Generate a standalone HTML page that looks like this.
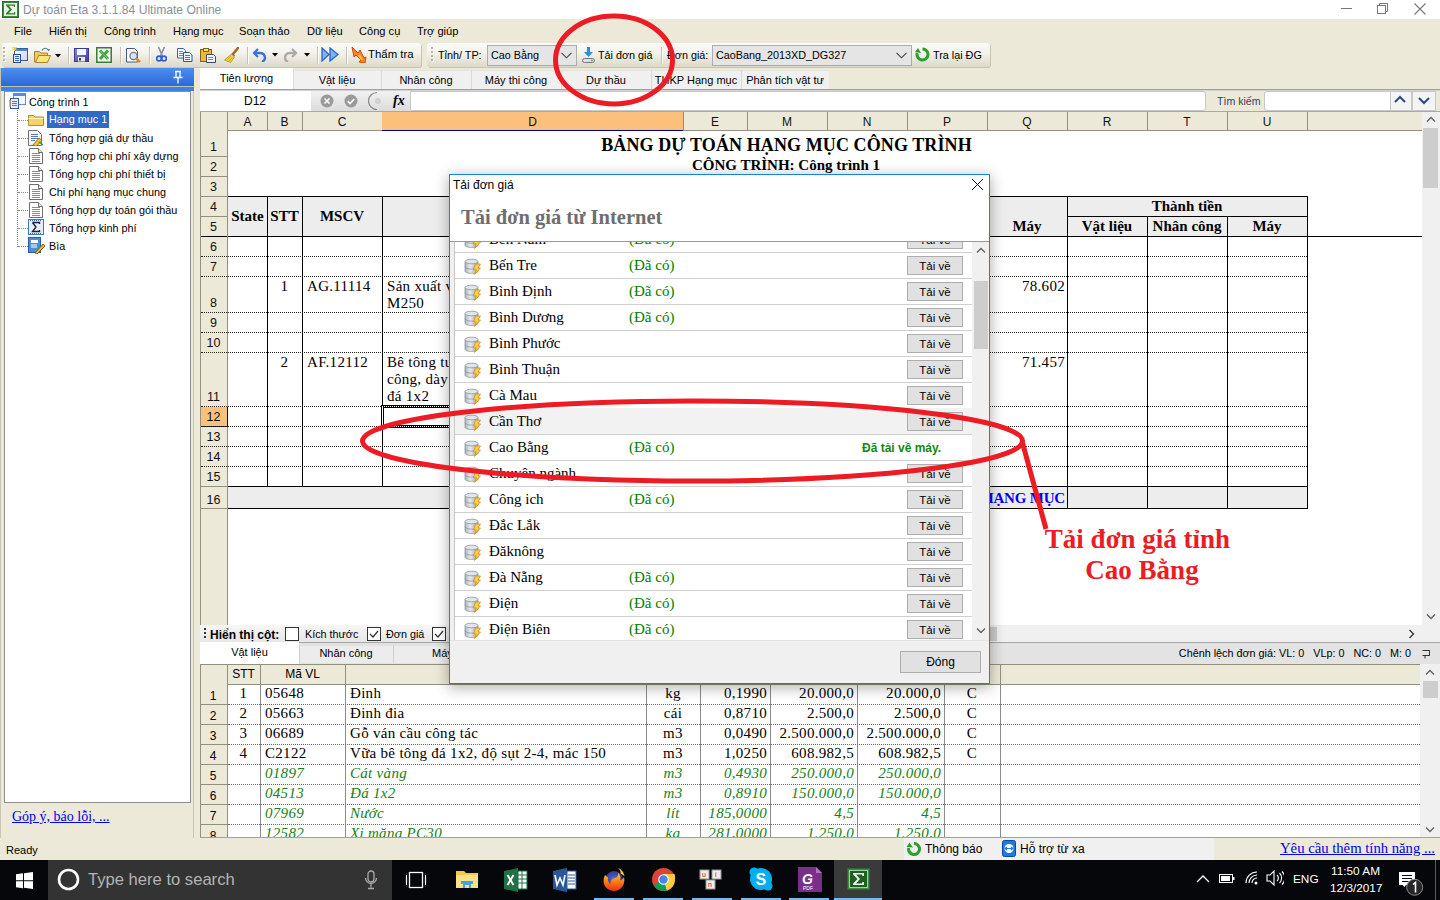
<!DOCTYPE html>
<html><head><meta charset="utf-8">
<style>
*{box-sizing:border-box}
html,body{margin:0;padding:0}
body{width:1440px;height:900px;overflow:hidden;position:relative;background:#ECE9D8;font-family:"Liberation Sans",sans-serif;font-size:11px;color:#000}
.a{position:absolute}
.t{position:absolute;white-space:nowrap;line-height:1}
.s{position:absolute;white-space:nowrap;line-height:1;font-family:"Liberation Serif",serif;font-size:15px;letter-spacing:0.3px}
.dh{position:absolute;height:0;border-top:1px dotted #222}
</style></head><body>
<div class="a" style="left:0px;top:0px;width:1440px;height:19px;background:#fff"></div>
<svg class="a" style="left:2px;top:1px;" width="17" height="17" viewBox="0 0 17 17"><rect x="0.5" y="0.5" width="16" height="16" fill="#3d8b40" stroke="#2a6a2d"/><rect x="2" y="2" width="13" height="13" fill="#e8f3e8"/><path d="M4 3.5h9v2.5h-1l-.5-1.2h-4.7l3.2 3.7-3.3 3.7h5l.5-1.3h1v2.6H4v-1l3.6-4-3.6-4z" fill="#2e7d32"/></svg>
<div class="t" style="left:23px;top:4px;font-size:12.1px;color:#8a8f9a">Dự toán Eta 3.1.1.84 Ultimate Online</div>
<div class="a" style="left:1341px;top:8px;width:11px;height:1px;background:#777"></div>
<svg class="a" style="left:1376px;top:2px;" width="14" height="14" viewBox="0 0 14 14"><rect x="1.5" y="3.5" width="8" height="8" fill="none" stroke="#777"/><path d="M3.5 3.5V1.5h8v8h-2" fill="none" stroke="#777"/></svg>
<svg class="a" style="left:1414px;top:3px;" width="12" height="12" viewBox="0 0 12 12"><path d="M.5 .5l11 11M11.5 .5l-11 11" stroke="#777" stroke-width="1.1"/></svg>
<div class="t" style="left:14px;top:26px;font-size:11.1px;color:#000">File</div>
<div class="t" style="left:49px;top:26px;font-size:11.1px;color:#000">Hiển thị</div>
<div class="t" style="left:104px;top:26px;font-size:11.1px;color:#000">Công trình</div>
<div class="t" style="left:173px;top:26px;font-size:11.1px;color:#000">Hạng mục</div>
<div class="t" style="left:239px;top:26px;font-size:11.1px;color:#000">Soạn thảo</div>
<div class="t" style="left:307px;top:26px;font-size:11.1px;color:#000">Dữ liệu</div>
<div class="t" style="left:359px;top:26px;font-size:11.1px;color:#000">Công cụ</div>
<div class="t" style="left:417px;top:26px;font-size:11.1px;color:#000">Trợ giúp</div>
<div class="a" style="left:2px;top:43px;width:419px;height:24px;background:linear-gradient(#fbfbf9 0%,#f2f1ea 45%,#dcd9c8 100%);border-radius:3px;box-shadow:1px 1px 0 #c8c4b0"></div>
<div class="a" style="left:427px;top:43px;width:563px;height:24px;background:linear-gradient(#fbfbf9 0%,#f2f1ea 45%,#dcd9c8 100%);border-radius:3px;box-shadow:1px 1px 0 #c8c4b0"></div>
<div class="a" style="left:3px;top:47px;width:2px;height:2px;background:#b8b4a0;box-shadow:1px 1px 0 #fff"></div>
<div class="a" style="left:3px;top:51px;width:2px;height:2px;background:#b8b4a0;box-shadow:1px 1px 0 #fff"></div>
<div class="a" style="left:3px;top:55px;width:2px;height:2px;background:#b8b4a0;box-shadow:1px 1px 0 #fff"></div>
<div class="a" style="left:3px;top:59px;width:2px;height:2px;background:#b8b4a0;box-shadow:1px 1px 0 #fff"></div>
<div class="a" style="left:431px;top:47px;width:2px;height:2px;background:#b8b4a0;box-shadow:1px 1px 0 #fff"></div>
<div class="a" style="left:431px;top:51px;width:2px;height:2px;background:#b8b4a0;box-shadow:1px 1px 0 #fff"></div>
<div class="a" style="left:431px;top:55px;width:2px;height:2px;background:#b8b4a0;box-shadow:1px 1px 0 #fff"></div>
<div class="a" style="left:431px;top:59px;width:2px;height:2px;background:#b8b4a0;box-shadow:1px 1px 0 #fff"></div>
<div class="a" style="left:68px;top:47px;width:1px;height:17px;background:#c5c2b2;box-shadow:1px 0 0 #fff"></div>
<div class="a" style="left:120px;top:47px;width:1px;height:17px;background:#c5c2b2;box-shadow:1px 0 0 #fff"></div>
<div class="a" style="left:149px;top:47px;width:1px;height:17px;background:#c5c2b2;box-shadow:1px 0 0 #fff"></div>
<div class="a" style="left:247px;top:47px;width:1px;height:17px;background:#c5c2b2;box-shadow:1px 0 0 #fff"></div>
<div class="a" style="left:317px;top:47px;width:1px;height:17px;background:#c5c2b2;box-shadow:1px 0 0 #fff"></div>
<div class="a" style="left:346px;top:47px;width:1px;height:17px;background:#c5c2b2;box-shadow:1px 0 0 #fff"></div>
<div class="a" style="left:661px;top:47px;width:1px;height:17px;background:#c5c2b2;box-shadow:1px 0 0 #fff"></div>
<svg class="a" style="left:12px;top:47px;" width="17" height="17" viewBox="0 0 17 17"><defs><linearGradient id="nw" x1="0" y1="0" x2="1" y2="1"><stop offset="0" stop-color="#fff"/><stop offset="1" stop-color="#c8d6ee"/></linearGradient></defs><rect x="2.5" y="1.5" width="13" height="12" fill="url(#nw)" stroke="#3a5a9a"/><rect x="3" y="2" width="12" height="2" fill="#4a86e0"/><rect x="1.5" y="7.5" width="7" height="8" fill="#e4ecfa" stroke="#2a4a8a"/><path d="M3 9.5h4M3 11.5h4M3 13.5h4" stroke="#3a6ad0"/><path d="M0 1h5M2.5 0v4M0.5 3l4-2.5M0.5 0l4 3" stroke="#f8d040" stroke-width="1"/></svg>
<svg class="a" style="left:34px;top:47px;" width="17" height="16" viewBox="0 0 17 16"><path d="M.5 4.5h5l1.5 1.5h6.5v9H.5z" fill="#f0c860" stroke="#b08030"/><path d="M1.5 15.5l3-7h12l-3 7z" fill="#fde37a" stroke="#b08030"/><path d="M8 3.5c1.5-3 5-3 6.5 0" fill="none" stroke="#4a7a8a" stroke-width="1.2"/><path d="M13.5 2.5l1.5 2 1-2.5" fill="#4a7a8a"/></svg>
<svg class="a" style="left:55px;top:54px;" width="7" height="4" viewBox="0 0 7 4"><path d="M0 0h6l-3 3.5z" fill="#000"/></svg>
<svg class="a" style="left:74px;top:48px;" width="15" height="14" viewBox="0 0 15 14"><defs><linearGradient id="sv" x1="0" y1="0" x2="1" y2="1"><stop offset="0" stop-color="#8a8ae8"/><stop offset="1" stop-color="#3a3aa8"/></linearGradient></defs><rect x=".5" y=".5" width="14" height="13" fill="url(#sv)" stroke="#3a3a90"/><rect x="3" y="1" width="9" height="6" fill="#f4f6ff"/><rect x="4" y="9" width="7" height="4.5" fill="#e8e8f0"/><rect x="5" y="10" width="2" height="2.5" fill="#333"/></svg>
<svg class="a" style="left:96px;top:47px;" width="16" height="16" viewBox="0 0 16 16"><rect x=".75" y=".75" width="14.5" height="14.5" fill="#eef6ee" stroke="#3a7a3a" stroke-width="1.5"/><path d="M4 3.5l8 8.5M12 3.5l-8 8.5" stroke="#3aa040" stroke-width="2.8"/><path d="M4 3.5l8 8.5" stroke="#8fdc8f" stroke-width=".8"/></svg>
<svg class="a" style="left:126px;top:48px;" width="16" height="15" viewBox="0 0 16 15"><path d="M.5 .5h8l3 3v10.5H.5z" fill="#fbfbff" stroke="#4a5a80"/><circle cx="7.5" cy="8" r="3.6" fill="#d8e6f8" stroke="#6a7a8a" stroke-width="1.2"/><path d="M10 10.5l4 3.5" stroke="#e08a30" stroke-width="2.6"/></svg>
<svg class="a" style="left:156px;top:47px;" width="11" height="15" viewBox="0 0 11 15"><path d="M2.5 0l4 9M8.5 0l-4 9" stroke="#8a8f98" stroke-width="1.6"/><circle cx="3" cy="11.5" r="2.4" fill="none" stroke="#2a5ad8" stroke-width="1.7"/><circle cx="8" cy="11.5" r="2.4" fill="none" stroke="#2a5ad8" stroke-width="1.7"/></svg>
<svg class="a" style="left:177px;top:48px;" width="16" height="14" viewBox="0 0 16 14"><path d="M.5 .5h6l2 2v7.5h-8z" fill="#f4f8ff" stroke="#3a62b8"/><path d="M2 3.5h4M2 5.5h4M2 7.5h4" stroke="#5a8ae0"/><path d="M6.5 4.5h6l2.5 2.5v6.5h-8.5z" fill="#f4f8ff" stroke="#2a52a8"/><path d="M8 7.5h5M8 9.5h5M8 11.5h5" stroke="#3a7ae0"/></svg>
<svg class="a" style="left:200px;top:48px;" width="16" height="15" viewBox="0 0 16 15"><rect x=".5" y="1.5" width="11" height="12" fill="#f0b830" stroke="#806020"/><rect x="3.5" y=".5" width="5" height="3" fill="#fde080" stroke="#806020"/><path d="M6.5 6.5h7l2 2v6h-9z" fill="#eef2f8" stroke="#404a5a"/><path d="M8 9.5h5M8 11.5h5" stroke="#7a8aa0"/></svg>
<svg class="a" style="left:224px;top:47px;" width="15" height="16" viewBox="0 0 15 16"><path d="M14 1l-5 6" stroke="#a06a20" stroke-width="2.6" stroke-linecap="round"/><path d="M8 6.5l2.5 2.5" stroke="#7a5aa0" stroke-width="1.4"/><path d="M7.5 7l3 3-4 5.5-6-2.5z" fill="#f2d040" stroke="#b0901a" stroke-width=".8"/><path d="M3 13l4-4M5 14l3.5-4" stroke="#c8a020" stroke-width=".7"/></svg>
<svg class="a" style="left:252px;top:47px;" width="15" height="15" viewBox="0 0 15 15"><path d="M6 2L2 6l4 4" fill="none" stroke="#3a70d8" stroke-width="2.2"/><path d="M3 6h5c4 0 5 3 5 5s-1 3-3 4" fill="none" stroke="#3a70d8" stroke-width="2.4"/></svg>
<svg class="a" style="left:272px;top:53px;" width="7" height="4" viewBox="0 0 7 4"><path d="M0 0h6l-3 3.5z" fill="#000"/></svg>
<svg class="a" style="left:284px;top:47px;" width="14" height="15" viewBox="0 0 14 15"><path d="M8 2l4 4-4 4" fill="none" stroke="#aaa" stroke-width="2.2"/><path d="M11 6H6c-4 0-5 3-5 5s1 3 3 4" fill="none" stroke="#aaa" stroke-width="2.4"/></svg>
<svg class="a" style="left:304px;top:53px;" width="7" height="4" viewBox="0 0 7 4"><path d="M0 0h6l-3 3.5z" fill="#000"/></svg>
<svg class="a" style="left:321px;top:47px;" width="18" height="15" viewBox="0 0 18 15"><path d="M1 1l7 6.5L1 14zM9 1l8 6.5L9 14z" fill="#7fb2f4" stroke="#2a62d0" stroke-width="1.3"/></svg>
<svg class="a" style="left:350px;top:46px;" width="17" height="17" viewBox="0 0 17 17"><path d="M2 1l6 6 2-3 4 8 2-1-1 6-6-1 2-2-5-5-2 2z" fill="#f7861b" stroke="#d8421a"/><path d="M9 9l3 5" stroke="#fbd020" stroke-width="2"/></svg>
<div class="t" style="left:368px;top:49px;font-size:11.4px;color:#000">Thẩm tra</div>
<div class="t" style="left:438px;top:50px;font-size:10.8px">Tỉnh/ TP:</div>
<div class="a" style="left:487px;top:45px;width:90px;height:21px;background:#e5e5e5;border:1px solid #acacac"></div>
<div class="t" style="left:491px;top:50px;font-size:10.8px">Cao Bằng</div>
<svg class="a" style="left:561px;top:52px;" width="11" height="7" viewBox="0 0 11 7"><path d="M.5 .8l5 5 5-5" fill="none" stroke="#444" stroke-width="1.1"/></svg>
<svg class="a" style="left:581px;top:47px;" width="15" height="17" viewBox="0 0 15 17"><path d="M7.5 0v8" stroke="#2a8ee8" stroke-width="3"/><path d="M3 5l4.5 5 4.5-5z" fill="#2a8ee8"/><rect x="1.5" y="11.5" width="12" height="4" rx="2" fill="#dde" stroke="#778"/><circle cx="11" cy="13.5" r="1" fill="#3c3"/></svg>
<div class="t" style="left:598px;top:50px;font-size:10.8px">Tải đơn giá</div>
<div class="t" style="left:667px;top:50px;font-size:10.8px">Đơn giá:</div>
<div class="a" style="left:712px;top:45px;width:200px;height:21px;background:#e5e5e5;border:1px solid #acacac"></div>
<div class="t" style="left:716px;top:50px;font-size:10.8px">CaoBang_2013XD_DG327</div>
<svg class="a" style="left:896px;top:52px;" width="11" height="7" viewBox="0 0 11 7"><path d="M.5 .8l5 5 5-5" fill="none" stroke="#444" stroke-width="1.1"/></svg>
<svg class="a" style="left:915px;top:47px;" width="15" height="15" viewBox="0 0 15 15"><path d="M7.5 2a5.5 5.5 0 1 1-5.3 4" fill="none" stroke="#2aa02a" stroke-width="3"/><path d="M0 5l3 -4 3 5z" fill="#2aa02a"/></svg>
<div class="t" style="left:933px;top:50px;font-size:10.8px">Tra lại ĐG</div>
<div class="a" style="left:0px;top:68px;width:1px;height:770px;background:#c9c6b6"></div>
<div class="a" style="left:1px;top:68px;width:193px;height:18px;background:linear-gradient(#4c8ef2,#2d68d6)"></div>
<div class="a" style="left:1px;top:86px;width:193px;height:1px;background:#c8c3a8"></div>
<div class="a" style="left:1px;top:87px;width:193px;height:4px;background:#3f80ea"></div>
<svg class="a" style="left:172px;top:70px;" width="12" height="14" viewBox="0 0 12 14"><path d="M3 1.5h6M4 1.5v6M8 1.5v6M1.5 7.5h9M6 7.5v6" stroke="#fff" stroke-width="1.3" fill="none"/></svg>
<div class="a" style="left:4px;top:91px;width:187px;height:712px;background:#fff;border:1px solid #8a8f96"></div>
<div class="a" style="left:193px;top:91px;width:1px;height:747px;background:#c9c6b6"></div>
<div class="a" style="left:17px;top:110px;width:0px;height:137px;border-left:1px dotted #888"></div>
<div class="a" style="left:18px;top:120px;width:10px;height:0px;border-top:1px dotted #888"></div>
<div class="a" style="left:18px;top:138px;width:10px;height:0px;border-top:1px dotted #888"></div>
<div class="a" style="left:18px;top:156px;width:10px;height:0px;border-top:1px dotted #888"></div>
<div class="a" style="left:18px;top:174px;width:10px;height:0px;border-top:1px dotted #888"></div>
<div class="a" style="left:18px;top:192px;width:10px;height:0px;border-top:1px dotted #888"></div>
<div class="a" style="left:18px;top:210px;width:10px;height:0px;border-top:1px dotted #888"></div>
<div class="a" style="left:18px;top:228px;width:10px;height:0px;border-top:1px dotted #888"></div>
<div class="a" style="left:18px;top:246px;width:10px;height:0px;border-top:1px dotted #888"></div>
<svg class="a" style="left:9px;top:93px;" width="17" height="17" viewBox="0 0 17 17"><rect x="4.5" y=".5" width="12" height="11" fill="#f4f8ff" stroke="#6a8ac0"/><rect x="5" y="1" width="11" height="2" fill="#5a8ae0"/><rect x="1.5" y="5.5" width="8" height="10" fill="#e8eefa" stroke="#3a5aa0"/><path d="M3 8.5h5M3 10.5h5M3 12.5h5" stroke="#4a7ad0"/><rect x="0" y="7" width="1.5" height="7" fill="#e8c050"/></svg>
<svg class="a" style="left:28px;top:113px;" width="16" height="13" viewBox="0 0 16 13"><path d="M.5 2.5h5l1.5 1.5h8.5v8.5H.5z" fill="#f4d46a" stroke="#b09030"/><path d="M.5 5.5h15" stroke="#fff3c0"/></svg>
<div class="a" style="left:47px;top:111px;width:62px;height:17px;background:#316ac5"></div>
<div class="t" style="left:49px;top:114px;font-size:10.8px;color:#fff">Hạng mục 1</div>
<div class="t" style="left:29px;top:97px;font-size:10.8px">Công trình 1</div>
<svg class="a" style="left:28px;top:130px;" width="16" height="16" viewBox="0 0 16 16"><path d="M.5 .5h9l4 4v11H.5z" fill="#f4f4f4" stroke="#707070"/><path d="M3 4.5h7M3 6.5h7M3 8.5h7M3 10.5h4" stroke="#5a7ab0"/><path d="M5 15l6-7 3 2.5-6 6z" fill="#f0c030" stroke="#806010" stroke-width=".8"/><path d="M11 12l4 3" stroke="#2a2" stroke-width="1.5"/></svg>
<svg class="a" style="left:29px;top:148px;" width="14" height="16" viewBox="0 0 14 16"><path d="M.5 .5h9l4 4v11H.5z" fill="#fff" stroke="#707070"/><path d="M9.5 .5v4h4" fill="#e8e8e8" stroke="#707070"/><path d="M3 5.5h8M3 7.5h8M3 9.5h8M3 11.5h8M3 13.5h8" stroke="#8a8a8a"/></svg>
<svg class="a" style="left:29px;top:166px;" width="14" height="16" viewBox="0 0 14 16"><path d="M.5 .5h9l4 4v11H.5z" fill="#fff" stroke="#707070"/><path d="M9.5 .5v4h4" fill="#e8e8e8" stroke="#707070"/><path d="M3 5.5h8M3 7.5h8M3 9.5h8M3 11.5h8M3 13.5h8" stroke="#8a8a8a"/></svg>
<svg class="a" style="left:29px;top:184px;" width="14" height="16" viewBox="0 0 14 16"><path d="M.5 .5h9l4 4v11H.5z" fill="#fff" stroke="#707070"/><path d="M9.5 .5v4h4" fill="#e8e8e8" stroke="#707070"/><path d="M3 5.5h8M3 7.5h8M3 9.5h8M3 11.5h8M3 13.5h8" stroke="#8a8a8a"/></svg>
<svg class="a" style="left:29px;top:202px;" width="14" height="16" viewBox="0 0 14 16"><path d="M.5 .5h9l4 4v11H.5z" fill="#fff" stroke="#707070"/><path d="M9.5 .5v4h4" fill="#e8e8e8" stroke="#707070"/><path d="M3 5.5h8M3 7.5h8M3 9.5h8M3 11.5h8M3 13.5h8" stroke="#8a8a8a"/></svg>
<svg class="a" style="left:28px;top:219px;" width="16" height="16" viewBox="0 0 16 16"><rect x=".5" y=".5" width="15" height="15" fill="#e6eef8" stroke="#3a78c8"/><path d="M4.5 3.5h7v1.5M4.5 3.5l3.5 4.5-3.5 4.5h7V11" fill="none" stroke="#223" stroke-width="1.4"/><path d="M2 14.5h12M2 1.5h12" stroke="#3a78c8" stroke-dasharray="1 1"/></svg>
<svg class="a" style="left:28px;top:237px;" width="17" height="17" viewBox="0 0 17 17"><rect x=".5" y=".5" width="12" height="15" fill="#4a90d8" stroke="#2a5aa0"/><rect x="3" y="3" width="7" height="3" fill="#fff"/><path d="M3 8h6M3 10h6" stroke="#fff"/><path d="M7 16l8-9 2 2-8 8z" fill="#f2b830" stroke="#806010"/></svg>
<div class="t" style="left:49px;top:133px;font-size:10.8px">Tổng hợp giá dự thầu</div>
<div class="t" style="left:49px;top:151px;font-size:10.8px">Tổng hợp chi phí xây dựng</div>
<div class="t" style="left:49px;top:169px;font-size:10.8px">Tổng hợp chi phí thiết bị</div>
<div class="t" style="left:49px;top:187px;font-size:10.8px">Chi phí hạng mục chung</div>
<div class="t" style="left:49px;top:205px;font-size:10.8px">Tổng hợp dự toán gói thầu</div>
<div class="t" style="left:49px;top:223px;font-size:10.8px">Tổng hợp kinh phí</div>
<div class="t" style="left:49px;top:241px;font-size:10.8px">Bìa</div>
<div class="t" style="left:12px;top:810px;font-family:'Liberation Serif',serif;font-size:14px;color:#0000ee;text-decoration:underline">Góp ý, báo lỗi, ...</div>
<div class="a" style="left:200px;top:68px;width:1240px;height:22px;background:#ECE9D8"></div>
<div class="a" style="left:200px;top:68px;width:93px;height:22px;background:#fff"></div>
<div class="t" style="left:246.5px;top:73px;font-size:11px;transform:translateX(-50%)">Tiên lượng</div>
<div class="a" style="left:293px;top:70px;width:88px;height:19px;background:#f0f0f0;border-left:1px solid #d9d9d9;border-top:1px solid #e3e3e3"></div>
<div class="t" style="left:337.0px;top:75px;font-size:11px;transform:translateX(-50%)">Vật liệu</div>
<div class="a" style="left:381px;top:70px;width:90px;height:19px;background:#f0f0f0;border-left:1px solid #d9d9d9;border-top:1px solid #e3e3e3"></div>
<div class="t" style="left:426.0px;top:75px;font-size:11px;transform:translateX(-50%)">Nhân công</div>
<div class="a" style="left:471px;top:70px;width:90px;height:19px;background:#f0f0f0;border-left:1px solid #d9d9d9;border-top:1px solid #e3e3e3"></div>
<div class="t" style="left:516.0px;top:75px;font-size:11px;transform:translateX(-50%)">Máy thi công</div>
<div class="a" style="left:561px;top:70px;width:90px;height:19px;background:#f0f0f0;border-left:1px solid #d9d9d9;border-top:1px solid #e3e3e3"></div>
<div class="t" style="left:606.0px;top:75px;font-size:11px;transform:translateX(-50%)">Dự thầu</div>
<div class="a" style="left:651px;top:70px;width:90px;height:19px;background:#f0f0f0;border-left:1px solid #d9d9d9;border-top:1px solid #e3e3e3"></div>
<div class="t" style="left:696.0px;top:75px;font-size:11px;transform:translateX(-50%)">THKP Hạng mục</div>
<div class="a" style="left:741px;top:70px;width:88px;height:19px;background:#f0f0f0;border-left:1px solid #d9d9d9;border-top:1px solid #e3e3e3"></div>
<div class="t" style="left:785.0px;top:75px;font-size:11px;transform:translateX(-50%)">Phân tích vật tư</div>
<div class="a" style="left:200px;top:89px;width:1240px;height:2px;background:#a0a0a0;border-bottom:1px solid #d0d0d0"></div>
<div class="a" style="left:200px;top:91px;width:1240px;height:21px;background:#ECE9D8"></div>
<div class="a" style="left:200px;top:91px;width:111px;height:20px;background:#fff"></div>
<div class="t" style="left:255px;top:95px;font-size:12px;transform:translateX(-50%)">D12</div>
<div class="a" style="left:311px;top:91px;width:99px;height:20px;background:linear-gradient(#f2f2f2,#dcdcdc)"></div>
<svg class="a" style="left:320px;top:94px;" width="14" height="14" viewBox="0 0 14 14"><circle cx="7" cy="7" r="6.5" fill="#9a9a9a"/><path d="M4.5 4.5l5 5M9.5 4.5l-5 5" stroke="#fff" stroke-width="1.6"/></svg>
<svg class="a" style="left:344px;top:94px;" width="14" height="14" viewBox="0 0 14 14"><circle cx="7" cy="7" r="6.5" fill="#9a9a9a"/><path d="M3.8 7.2l2.2 2.3 4.2-4.5" stroke="#fff" stroke-width="1.8" fill="none"/></svg>
<svg class="a" style="left:368px;top:91px;" width="18" height="20" viewBox="0 0 18 20"><path d="M9 1.5A8.5 8.5 0 0 0 9 18.5" fill="none" stroke="#8a8a8a" stroke-width="1.2"/><circle cx="10" cy="10" r="3" fill="#d0d0d0"/></svg>
<div class="t" style="left:393px;top:94px;font-family:'Liberation Serif',serif;font-size:14px;font-style:italic;font-weight:bold">fx</div>
<div class="a" style="left:410px;top:91px;width:796px;height:20px;background:#fff;border:1px solid #c8c8c8;border-radius:0 3px 3px 0"></div>
<div class="t" style="left:1217px;top:96px;font-size:10.6px;color:#334466">Tìm kiếm</div>
<div class="a" style="left:1264px;top:91px;width:130px;height:20px;background:#fff;border:1px solid #c8c8c8;border-radius:3px 0 0 3px"></div>
<div class="a" style="left:1390px;top:91px;width:22px;height:20px;background:#f4f4f4;border:1px solid #c8c8c8"></div>
<div class="a" style="left:1412px;top:91px;width:24px;height:20px;background:#f4f4f4;border:1px solid #c8c8c8"></div>
<svg class="a" style="left:1394px;top:95px;" width="12" height="9" viewBox="0 0 12 9"><path d="M1 7l5-5 5 5" fill="none" stroke="#2b4c7e" stroke-width="2"/></svg>
<svg class="a" style="left:1418px;top:96px;" width="12" height="9" viewBox="0 0 12 9"><path d="M1 2l5 5 5-5" fill="none" stroke="#2b4c7e" stroke-width="2"/></svg>
<div class="a" style="left:200px;top:111px;width:1240px;height:1px;background:#a8a8a8"></div>
<div class="a" style="left:194px;top:68px;width:6px;height:770px;background:#ECE9D8"></div>
<div class="a" style="left:200px;top:112px;width:1222px;height:513px;background:#fff"></div>
<div class="a" style="left:200px;top:112px;width:1222px;height:19px;background:#ECE9D8;border-bottom:1px solid #94907c"></div>
<div class="a" style="left:227px;top:112px;width:1px;height:513px;background:#94907c"></div>
<div class="a" style="left:267px;top:112px;width:1px;height:19px;background:#94907c"></div>
<div class="t" style="left:247.5px;top:116px;font-size:12px;transform:translateX(-50%);color:#111">A</div>
<div class="a" style="left:302px;top:112px;width:1px;height:19px;background:#94907c"></div>
<div class="t" style="left:284.5px;top:116px;font-size:12px;transform:translateX(-50%);color:#111">B</div>
<div class="a" style="left:382px;top:112px;width:1px;height:19px;background:#94907c"></div>
<div class="t" style="left:342.0px;top:116px;font-size:12px;transform:translateX(-50%);color:#111">C</div>
<div class="a" style="left:382px;top:112px;width:302px;height:19px;background:#fbc07b;border-bottom:1px solid #00007f;border-right:1px solid #00007f"></div>
<div class="a" style="left:683px;top:112px;width:1px;height:19px;background:#94907c"></div>
<div class="t" style="left:532.5px;top:116px;font-size:12px;transform:translateX(-50%);color:#111">D</div>
<div class="a" style="left:747px;top:112px;width:1px;height:19px;background:#94907c"></div>
<div class="t" style="left:715.0px;top:116px;font-size:12px;transform:translateX(-50%);color:#111">E</div>
<div class="a" style="left:827px;top:112px;width:1px;height:19px;background:#94907c"></div>
<div class="t" style="left:787.0px;top:116px;font-size:12px;transform:translateX(-50%);color:#111">M</div>
<div class="a" style="left:907px;top:112px;width:1px;height:19px;background:#94907c"></div>
<div class="t" style="left:867.0px;top:116px;font-size:12px;transform:translateX(-50%);color:#111">N</div>
<div class="a" style="left:987px;top:112px;width:1px;height:19px;background:#94907c"></div>
<div class="t" style="left:947.0px;top:116px;font-size:12px;transform:translateX(-50%);color:#111">P</div>
<div class="a" style="left:1067px;top:112px;width:1px;height:19px;background:#94907c"></div>
<div class="t" style="left:1027.0px;top:116px;font-size:12px;transform:translateX(-50%);color:#111">Q</div>
<div class="a" style="left:1147px;top:112px;width:1px;height:19px;background:#94907c"></div>
<div class="t" style="left:1107.0px;top:116px;font-size:12px;transform:translateX(-50%);color:#111">R</div>
<div class="a" style="left:1227px;top:112px;width:1px;height:19px;background:#94907c"></div>
<div class="t" style="left:1187.0px;top:116px;font-size:12px;transform:translateX(-50%);color:#111">T</div>
<div class="a" style="left:1307px;top:112px;width:1px;height:19px;background:#94907c"></div>
<div class="t" style="left:1267.0px;top:116px;font-size:12px;transform:translateX(-50%);color:#111">U</div>
<div class="a" style="left:200px;top:130px;width:27px;height:495px;background:#ECE9D8"></div>
<div class="a" style="left:200px;top:112px;width:1px;height:513px;background:#94907c"></div>
<div class="a" style="left:200px;top:156px;width:27px;height:1px;background:#94907c"></div>
<div class="t" style="left:213.5px;top:141px;font-size:12.5px;transform:translateX(-50%);color:#111">1</div>
<div class="a" style="left:200px;top:176px;width:27px;height:1px;background:#94907c"></div>
<div class="t" style="left:213.5px;top:161px;font-size:12.5px;transform:translateX(-50%);color:#111">2</div>
<div class="a" style="left:200px;top:196px;width:27px;height:1px;background:#94907c"></div>
<div class="t" style="left:213.5px;top:181px;font-size:12.5px;transform:translateX(-50%);color:#111">3</div>
<div class="a" style="left:200px;top:216px;width:27px;height:1px;background:#94907c"></div>
<div class="t" style="left:213.5px;top:201px;font-size:12.5px;transform:translateX(-50%);color:#111">4</div>
<div class="a" style="left:201px;top:236px;width:26px;height:1px;background:#000"></div>
<div class="t" style="left:213.5px;top:221px;font-size:12.5px;transform:translateX(-50%);color:#111">5</div>
<div class="dh" style="left:201px;top:256px;width:26px"></div>
<div class="t" style="left:213.5px;top:241px;font-size:12.5px;transform:translateX(-50%);color:#111">6</div>
<div class="dh" style="left:201px;top:276px;width:26px"></div>
<div class="t" style="left:213.5px;top:261px;font-size:12.5px;transform:translateX(-50%);color:#111">7</div>
<div class="dh" style="left:201px;top:312px;width:26px"></div>
<div class="t" style="left:213.5px;top:297px;font-size:12.5px;transform:translateX(-50%);color:#111">8</div>
<div class="dh" style="left:201px;top:332px;width:26px"></div>
<div class="t" style="left:213.5px;top:317px;font-size:12.5px;transform:translateX(-50%);color:#111">9</div>
<div class="dh" style="left:201px;top:352px;width:26px"></div>
<div class="t" style="left:213.5px;top:337px;font-size:12.5px;transform:translateX(-50%);color:#111">10</div>
<div class="dh" style="left:201px;top:406px;width:26px"></div>
<div class="t" style="left:213.5px;top:391px;font-size:12.5px;transform:translateX(-50%);color:#111">11</div>
<div class="a" style="left:201px;top:407px;width:27px;height:20px;background:#fbc07b;border-bottom:1px solid #00007f;border-right:1px solid #00007f"></div>
<div class="dh" style="left:201px;top:426px;width:26px"></div>
<div class="t" style="left:213.5px;top:411px;font-size:12.5px;transform:translateX(-50%);color:#111">12</div>
<div class="dh" style="left:201px;top:446px;width:26px"></div>
<div class="t" style="left:213.5px;top:431px;font-size:12.5px;transform:translateX(-50%);color:#111">13</div>
<div class="dh" style="left:201px;top:466px;width:26px"></div>
<div class="t" style="left:213.5px;top:451px;font-size:12.5px;transform:translateX(-50%);color:#111">14</div>
<div class="a" style="left:200px;top:486px;width:27px;height:1px;background:#94907c"></div>
<div class="t" style="left:213.5px;top:471px;font-size:12.5px;transform:translateX(-50%);color:#111">15</div>
<div class="a" style="left:200px;top:508px;width:27px;height:1px;background:#94907c"></div>
<div class="t" style="left:213.5px;top:494px;font-size:12.5px;transform:translateX(-50%);color:#111">16</div>
<div class="a" style="left:228px;top:196px;width:1079px;height:40px;background:#ededed"></div>
<div class="a" style="left:228px;top:486px;width:1079px;height:22px;background:#ededed"></div>
<div class="a" style="left:267px;top:196px;width:1px;height:290px;background:#000"></div>
<div class="a" style="left:302px;top:196px;width:1px;height:290px;background:#000"></div>
<div class="a" style="left:382px;top:196px;width:1px;height:290px;background:#000"></div>
<div class="a" style="left:683px;top:196px;width:1px;height:290px;background:#000"></div>
<div class="a" style="left:987px;top:196px;width:1px;height:290px;background:#000"></div>
<div class="a" style="left:1067px;top:196px;width:1px;height:313px;background:#000"></div>
<div class="a" style="left:1307px;top:196px;width:1px;height:313px;background:#000"></div>
<div class="a" style="left:1147px;top:216px;width:1px;height:293px;background:#000"></div>
<div class="a" style="left:1227px;top:216px;width:1px;height:293px;background:#000"></div>
<div class="a" style="left:228px;top:196px;width:1079px;height:1px;background:#000"></div>
<div class="a" style="left:228px;top:236px;width:1194px;height:1px;background:#000"></div>
<div class="a" style="left:228px;top:486px;width:1079px;height:1px;background:#000"></div>
<div class="a" style="left:228px;top:508px;width:1079px;height:1px;background:#000"></div>
<div class="a" style="left:1067px;top:216px;width:240px;height:1px;background:#000"></div>
<div class="dh" style="left:228px;top:256px;width:1079px"></div>
<div class="dh" style="left:228px;top:276px;width:1079px"></div>
<div class="dh" style="left:228px;top:312px;width:1079px"></div>
<div class="dh" style="left:228px;top:332px;width:1079px"></div>
<div class="dh" style="left:228px;top:352px;width:1079px"></div>
<div class="dh" style="left:228px;top:406px;width:1079px"></div>
<div class="dh" style="left:228px;top:426px;width:1079px"></div>
<div class="dh" style="left:228px;top:446px;width:1079px"></div>
<div class="dh" style="left:228px;top:466px;width:1079px"></div>
<div class="a" style="left:381px;top:405px;width:305px;height:23px;border:3px solid #000"></div>
<div class="a" style="left:382px;top:406px;width:303px;height:21px;border:1px dotted #fff;border-left:1px solid #fff"></div>
<div class="t" style="left:786.5px;top:136px;font-family:'Liberation Serif',serif;font-size:15px;font-weight:bold;font-size:18px;letter-spacing:0.1px;transform:translateX(-50%)">BẢNG DỰ TOÁN HẠNG MỤC CÔNG TRÌNH</div>
<div class="t" style="left:786px;top:158px;font-family:'Liberation Serif',serif;font-size:15px;font-weight:bold;transform:translateX(-50%)">CÔNG TRÌNH: Công trình 1</div>
<div class="t" style="left:247.5px;top:209px;font-family:'Liberation Serif',serif;font-size:15px;font-weight:bold;transform:translateX(-50%)">State</div>
<div class="t" style="left:284.5px;top:209px;font-family:'Liberation Serif',serif;font-size:15px;font-weight:bold;transform:translateX(-50%)">STT</div>
<div class="t" style="left:342px;top:209px;font-family:'Liberation Serif',serif;font-size:15px;font-weight:bold;transform:translateX(-50%)">MSCV</div>
<div class="t" style="left:1027px;top:219px;font-family:'Liberation Serif',serif;font-size:15px;font-weight:bold;transform:translateX(-50%)">Máy</div>
<div class="t" style="left:1187px;top:199px;font-family:'Liberation Serif',serif;font-size:15px;font-weight:bold;transform:translateX(-50%)">Thành tiền</div>
<div class="t" style="left:1107px;top:219px;font-family:'Liberation Serif',serif;font-size:15px;font-weight:bold;transform:translateX(-50%)">Vật liệu</div>
<div class="t" style="left:1187px;top:219px;font-family:'Liberation Serif',serif;font-size:15px;font-weight:bold;transform:translateX(-50%)">Nhân công</div>
<div class="t" style="left:1267px;top:219px;font-family:'Liberation Serif',serif;font-size:15px;font-weight:bold;transform:translateX(-50%)">Máy</div>
<div class="s" style="left:284.5px;top:279px;transform:translateX(-50%)">1</div>
<div class="s" style="left:307px;top:279px;">AG.11114</div>
<div class="s" style="left:387px;top:279px;">Sản xuất vữa bê tông</div>
<div class="s" style="left:387px;top:296px;">M250</div>
<div class="s" style="left:284.5px;top:355px;transform:translateX(-50%)">2</div>
<div class="s" style="left:307px;top:355px;">AF.12112</div>
<div class="s" style="left:387px;top:355px;">Bê tông tường</div>
<div class="s" style="left:387px;top:372px;">công, dày</div>
<div class="s" style="left:387px;top:389px;">đá 1x2</div>
<div class="s" style="left:1065px;top:279px;transform:translateX(-100%)">78.602</div>
<div class="s" style="left:1065px;top:355px;transform:translateX(-100%)">71.457</div>
<div class="s" style="left:1065px;top:491px;transform:translateX(-100%);font-weight:bold;color:#0000ff;letter-spacing:-0.2px">TỔNG CỘNG HẠNG MỤC</div>
<div class="a" style="left:1422px;top:112px;width:18px;height:513px;background:#f0f0f0"></div>
<svg class="a" style="left:1426px;top:116px;" width="10" height="7" viewBox="0 0 10 7"><path d="M1 5.5l4-4 4 4" fill="none" stroke="#606060" stroke-width="1.3"/></svg>
<div class="a" style="left:1423px;top:128px;width:15px;height:60px;background:#cdcdcd"></div>
<svg class="a" style="left:1426px;top:613px;" width="10" height="7" viewBox="0 0 10 7"><path d="M1 1.5l4 4 4-4" fill="none" stroke="#606060" stroke-width="1.3"/></svg>
<div class="a" style="left:200px;top:625px;width:1240px;height:17px;background:#f0f0f0"></div>
<div class="a" style="left:200px;top:625px;width:500px;height:17px;background:linear-gradient(#f7f7f7,#e6e6e6)"></div>
<div class="a" style="left:204px;top:628px;width:2px;height:2px;background:#333"></div>
<div class="a" style="left:204px;top:632px;width:2px;height:2px;background:#333"></div>
<div class="a" style="left:204px;top:636px;width:2px;height:2px;background:#333"></div>
<div class="t" style="left:210px;top:629px;font-size:12px;font-weight:bold">Hiển thị cột:</div>
<svg class="a" style="left:285px;top:627px;" width="14" height="14" viewBox="0 0 14 14"><rect x=".5" y=".5" width="13" height="13" fill="#fff" stroke="#333"/></svg>
<div class="t" style="left:305px;top:629px;font-size:10.8px">Kích thước</div>
<svg class="a" style="left:367px;top:627px;" width="14" height="14" viewBox="0 0 14 14"><rect x=".5" y=".5" width="13" height="13" fill="#fff" stroke="#333"/><path d="M3 7l3 3 5-6" fill="none" stroke="#333" stroke-width="1.2"/></svg>
<div class="t" style="left:386px;top:629px;font-size:10.8px">Đơn giá</div>
<svg class="a" style="left:432px;top:627px;" width="14" height="14" viewBox="0 0 14 14"><rect x=".5" y=".5" width="13" height="13" fill="#fff" stroke="#333"/><path d="M3 7l3 3 5-6" fill="none" stroke="#333" stroke-width="1.2"/></svg>
<div class="a" style="left:990px;top:627px;width:7px;height:14px;background:#cdcdcd"></div>
<svg class="a" style="left:1408px;top:629px;" width="8" height="10" viewBox="0 0 8 10"><path d="M1.5 1l4 4-4 4" fill="none" stroke="#333" stroke-width="1.3"/></svg>
<div class="a" style="left:200px;top:642px;width:1240px;height:2px;background:#a8a8a8;border-bottom:1px solid #e0e0e0"></div>
<div class="a" style="left:200px;top:644px;width:1240px;height:20px;background:#e3e3e3"></div>
<div class="a" style="left:200px;top:642px;width:99px;height:22px;background:#fff"></div>
<div class="a" style="left:299px;top:645px;width:94px;height:18px;background:#ececec;border-left:1px solid #d0d0d0;border-top:1px solid #e0e0e0"></div>
<div class="a" style="left:393px;top:645px;width:94px;height:18px;background:#ececec;border-left:1px solid #d0d0d0;border-top:1px solid #e0e0e0"></div>
<div class="t" style="left:249.5px;top:647px;font-size:11px;transform:translateX(-50%)">Vật liệu</div>
<div class="t" style="left:346px;top:648px;font-size:11px;transform:translateX(-50%)">Nhân công</div>
<div class="t" style="left:432px;top:648px;font-size:11px">Máy thi công</div>
<div class="t" style="left:1411px;top:648px;font-size:10.8px;transform:translateX(-100%)">Chênh lệch đơn giá: VL: 0&nbsp;&nbsp; VLp: 0&nbsp;&nbsp; NC: 0&nbsp;&nbsp; M: 0</div>
<svg class="a" style="left:1421px;top:647px;" width="11" height="12" viewBox="0 0 11 12"><path d="M1.5 3.5h7v5h-7M8.5 3.5v5M4 8.5v3" stroke="#333" fill="none"/></svg>
<div class="a" style="left:200px;top:664px;width:1220px;height:173px;background:#fff"></div>
<div class="a" style="left:200px;top:664px;width:1220px;height:21px;background:#ECE9D8;border-bottom:1px solid #94907c;border-top:1px solid #94907c"></div>
<div class="a" style="left:200px;top:684px;width:27px;height:153px;background:#ECE9D8"></div>
<div class="a" style="left:227px;top:664px;width:1px;height:20px;background:#94907c"></div>
<div class="a" style="left:227px;top:684px;width:1px;height:153px;background:#8c8c8c"></div>
<div class="a" style="left:260px;top:664px;width:1px;height:20px;background:#94907c"></div>
<div class="a" style="left:260px;top:684px;width:1px;height:153px;background:#8c8c8c"></div>
<div class="a" style="left:345px;top:664px;width:1px;height:20px;background:#94907c"></div>
<div class="a" style="left:345px;top:684px;width:1px;height:153px;background:#8c8c8c"></div>
<div class="a" style="left:646px;top:664px;width:1px;height:20px;background:#94907c"></div>
<div class="a" style="left:646px;top:684px;width:1px;height:153px;background:#8c8c8c"></div>
<div class="a" style="left:700px;top:664px;width:1px;height:20px;background:#94907c"></div>
<div class="a" style="left:700px;top:684px;width:1px;height:153px;background:#8c8c8c"></div>
<div class="a" style="left:770px;top:664px;width:1px;height:20px;background:#94907c"></div>
<div class="a" style="left:770px;top:684px;width:1px;height:153px;background:#8c8c8c"></div>
<div class="a" style="left:857px;top:664px;width:1px;height:20px;background:#94907c"></div>
<div class="a" style="left:857px;top:684px;width:1px;height:153px;background:#8c8c8c"></div>
<div class="a" style="left:944px;top:664px;width:1px;height:20px;background:#94907c"></div>
<div class="a" style="left:944px;top:684px;width:1px;height:153px;background:#8c8c8c"></div>
<div class="a" style="left:1000px;top:664px;width:1px;height:20px;background:#94907c"></div>
<div class="a" style="left:1000px;top:684px;width:1px;height:153px;background:#8c8c8c"></div>
<div class="a" style="left:227px;top:684px;width:1px;height:153px;background:#94907c"></div>
<div class="a" style="left:200px;top:664px;width:1px;height:174px;background:#94907c"></div>
<div class="t" style="left:243.5px;top:668px;font-size:12px;transform:translateX(-50%)">STT</div>
<div class="t" style="left:302.5px;top:668px;font-size:12px;transform:translateX(-50%)">Mã VL</div>
<div class="a" style="left:200px;top:684px;width:1220px;height:153px;overflow:hidden">
<div class="dh" style="left:28px;top:20px;width:1192px;border-top-color:#666"></div>
<div class="a" style="left:0;top:20px;width:27px;height:1px;background:#94907c"></div>
<div class="t" style="left:13px;top:6px;font-size:12px;transform:translateX(-50%)">1</div>
<div class="s" style="left:43.5px;top:2px;transform:translateX(-50%);">1</div>
<div class="s" style="left:65px;top:2px;">05648</div>
<div class="s" style="left:150px;top:2px;">Đinh</div>
<div class="s" style="left:473px;top:2px;transform:translateX(-50%);">kg</div>
<div class="s" style="left:567px;top:2px;transform:translateX(-100%);">0,1990</div>
<div class="s" style="left:654px;top:2px;transform:translateX(-100%);">20.000,0</div>
<div class="s" style="left:741px;top:2px;transform:translateX(-100%);">20.000,0</div>
<div class="s" style="left:772px;top:2px;transform:translateX(-50%);">C</div>
<div class="dh" style="left:28px;top:40px;width:1192px;border-top-color:#666"></div>
<div class="a" style="left:0;top:40px;width:27px;height:1px;background:#94907c"></div>
<div class="t" style="left:13px;top:26px;font-size:12px;transform:translateX(-50%)">2</div>
<div class="s" style="left:43.5px;top:22px;transform:translateX(-50%);">2</div>
<div class="s" style="left:65px;top:22px;">05663</div>
<div class="s" style="left:150px;top:22px;">Đinh đia</div>
<div class="s" style="left:473px;top:22px;transform:translateX(-50%);">cái</div>
<div class="s" style="left:567px;top:22px;transform:translateX(-100%);">0,8710</div>
<div class="s" style="left:654px;top:22px;transform:translateX(-100%);">2.500,0</div>
<div class="s" style="left:741px;top:22px;transform:translateX(-100%);">2.500,0</div>
<div class="s" style="left:772px;top:22px;transform:translateX(-50%);">C</div>
<div class="dh" style="left:28px;top:60px;width:1192px;border-top-color:#666"></div>
<div class="a" style="left:0;top:60px;width:27px;height:1px;background:#94907c"></div>
<div class="t" style="left:13px;top:46px;font-size:12px;transform:translateX(-50%)">3</div>
<div class="s" style="left:43.5px;top:42px;transform:translateX(-50%);">3</div>
<div class="s" style="left:65px;top:42px;">06689</div>
<div class="s" style="left:150px;top:42px;">Gỗ ván cầu công tác</div>
<div class="s" style="left:473px;top:42px;transform:translateX(-50%);">m3</div>
<div class="s" style="left:567px;top:42px;transform:translateX(-100%);">0,0490</div>
<div class="s" style="left:654px;top:42px;transform:translateX(-100%);">2.500.000,0</div>
<div class="s" style="left:741px;top:42px;transform:translateX(-100%);">2.500.000,0</div>
<div class="s" style="left:772px;top:42px;transform:translateX(-50%);">C</div>
<div class="dh" style="left:28px;top:80px;width:1192px;border-top-color:#666"></div>
<div class="a" style="left:0;top:80px;width:27px;height:1px;background:#94907c"></div>
<div class="t" style="left:13px;top:66px;font-size:12px;transform:translateX(-50%)">4</div>
<div class="s" style="left:43.5px;top:62px;transform:translateX(-50%);">4</div>
<div class="s" style="left:65px;top:62px;">C2122</div>
<div class="s" style="left:150px;top:62px;">Vữa bê tông đá 1x2, độ sụt 2-4, mác 150</div>
<div class="s" style="left:473px;top:62px;transform:translateX(-50%);">m3</div>
<div class="s" style="left:567px;top:62px;transform:translateX(-100%);">1,0250</div>
<div class="s" style="left:654px;top:62px;transform:translateX(-100%);">608.982,5</div>
<div class="s" style="left:741px;top:62px;transform:translateX(-100%);">608.982,5</div>
<div class="s" style="left:772px;top:62px;transform:translateX(-50%);">C</div>
<div class="dh" style="left:28px;top:100px;width:1192px;border-top-color:#666"></div>
<div class="a" style="left:0;top:100px;width:27px;height:1px;background:#94907c"></div>
<div class="t" style="left:13px;top:86px;font-size:12px;transform:translateX(-50%)">5</div>
<div class="s" style="left:65px;top:82px;font-style:italic;color:#178017;">01897</div>
<div class="s" style="left:150px;top:82px;font-style:italic;color:#178017;">Cát vàng</div>
<div class="s" style="left:473px;top:82px;font-style:italic;color:#178017;transform:translateX(-50%);">m3</div>
<div class="s" style="left:567px;top:82px;font-style:italic;color:#178017;transform:translateX(-100%);">0,4930</div>
<div class="s" style="left:654px;top:82px;font-style:italic;color:#178017;transform:translateX(-100%);">250.000,0</div>
<div class="s" style="left:741px;top:82px;font-style:italic;color:#178017;transform:translateX(-100%);">250.000,0</div>
<div class="dh" style="left:28px;top:120px;width:1192px;border-top-color:#666"></div>
<div class="a" style="left:0;top:120px;width:27px;height:1px;background:#94907c"></div>
<div class="t" style="left:13px;top:106px;font-size:12px;transform:translateX(-50%)">6</div>
<div class="s" style="left:65px;top:102px;font-style:italic;color:#178017;">04513</div>
<div class="s" style="left:150px;top:102px;font-style:italic;color:#178017;">Đá 1x2</div>
<div class="s" style="left:473px;top:102px;font-style:italic;color:#178017;transform:translateX(-50%);">m3</div>
<div class="s" style="left:567px;top:102px;font-style:italic;color:#178017;transform:translateX(-100%);">0,8910</div>
<div class="s" style="left:654px;top:102px;font-style:italic;color:#178017;transform:translateX(-100%);">150.000,0</div>
<div class="s" style="left:741px;top:102px;font-style:italic;color:#178017;transform:translateX(-100%);">150.000,0</div>
<div class="dh" style="left:28px;top:140px;width:1192px;border-top-color:#666"></div>
<div class="a" style="left:0;top:140px;width:27px;height:1px;background:#94907c"></div>
<div class="t" style="left:13px;top:126px;font-size:12px;transform:translateX(-50%)">7</div>
<div class="s" style="left:65px;top:122px;font-style:italic;color:#178017;">07969</div>
<div class="s" style="left:150px;top:122px;font-style:italic;color:#178017;">Nước</div>
<div class="s" style="left:473px;top:122px;font-style:italic;color:#178017;transform:translateX(-50%);">lít</div>
<div class="s" style="left:567px;top:122px;font-style:italic;color:#178017;transform:translateX(-100%);">185,0000</div>
<div class="s" style="left:654px;top:122px;font-style:italic;color:#178017;transform:translateX(-100%);">4,5</div>
<div class="s" style="left:741px;top:122px;font-style:italic;color:#178017;transform:translateX(-100%);">4,5</div>
<div class="dh" style="left:28px;top:160px;width:1192px;border-top-color:#666"></div>
<div class="a" style="left:0;top:160px;width:27px;height:1px;background:#94907c"></div>
<div class="t" style="left:13px;top:146px;font-size:12px;transform:translateX(-50%)">8</div>
<div class="s" style="left:65px;top:142px;font-style:italic;color:#178017;">12582</div>
<div class="s" style="left:150px;top:142px;font-style:italic;color:#178017;">Xi măng PC30</div>
<div class="s" style="left:473px;top:142px;font-style:italic;color:#178017;transform:translateX(-50%);">kg</div>
<div class="s" style="left:567px;top:142px;font-style:italic;color:#178017;transform:translateX(-100%);">281,0000</div>
<div class="s" style="left:654px;top:142px;font-style:italic;color:#178017;transform:translateX(-100%);">1.250,0</div>
<div class="s" style="left:741px;top:142px;font-style:italic;color:#178017;transform:translateX(-100%);">1.250,0</div>
</div>
<div class="a" style="left:1420px;top:664px;width:20px;height:174px;background:#f0f0f0"></div>
<svg class="a" style="left:1425px;top:669px;" width="10" height="7" viewBox="0 0 10 7"><path d="M1 5.5l4-4 4 4" fill="none" stroke="#606060" stroke-width="1.3"/></svg>
<div class="a" style="left:1423px;top:681px;width:15px;height:17px;background:#cdcdcd"></div>
<svg class="a" style="left:1425px;top:826px;" width="10" height="7" viewBox="0 0 10 7"><path d="M1 1.5l4 4 4-4" fill="none" stroke="#606060" stroke-width="1.3"/></svg>
<div class="a" style="left:200px;top:837px;width:1240px;height:1px;background:#a0a0a0"></div>
<div class="a" style="left:0px;top:838px;width:1440px;height:22px;background:#ECE9D8"></div>
<div class="a" style="left:904px;top:838px;width:310px;height:22px;background:#f0f0f0"></div>
<div class="t" style="left:6px;top:845px;font-size:11px">Ready</div>
<svg class="a" style="left:906px;top:841px;" width="16" height="16" viewBox="0 0 16 16"><path d="M8 2.5a5.5 5.5 0 1 1-5.4 4.5" fill="none" stroke="#2aa02a" stroke-width="3"/><path d="M.5 6l3-4.5 3.5 5z" fill="#2aa02a"/></svg>
<div class="t" style="left:925px;top:843px;font-size:12px">Thông báo</div>
<svg class="a" style="left:1002px;top:840px;" width="14" height="17" viewBox="0 0 14 17"><rect x=".5" y=".5" width="13" height="16" rx="2" fill="#1c7ce0" stroke="#0a4a9a"/><circle cx="7" cy="8.5" r="4.5" fill="#fff"/><path d="M4 8.5h6M5 7l-2 1.5 2 1.5M9 7l2 1.5-2 1.5" stroke="#1c7ce0" stroke-width="1.1" fill="none"/></svg>
<div class="t" style="left:1020px;top:843px;font-size:12px">Hỗ trợ từ xa</div>
<div class="t" style="left:1280px;top:840.5px;font-family:'Liberation Serif',serif;font-size:14.7px;color:#0000ee;text-decoration:underline">Yêu cầu thêm tính năng ...</div>
<div class="a" style="left:0px;top:860px;width:1440px;height:40px;background:#06070b"></div>
<div class="a" style="left:48px;top:860px;width:344px;height:40px;background:#333"></div>
<svg class="a" style="left:16px;top:872px;" width="17" height="17" viewBox="0 0 17 17"><path d="M0 2.3l7-1v7H0zM8 1.2L17 0v8.3H8zM0 9.2h7v7L0 15.2zM8 9.2h9V17l-9-1.2z" fill="#fff"/></svg>
<svg class="a" style="left:57px;top:868px;" width="23" height="23" viewBox="0 0 23 23"><circle cx="11.5" cy="11.5" r="9.5" fill="none" stroke="#fff" stroke-width="2.6"/></svg>
<div class="t" style="left:88px;top:871.5px;font-size:16.6px;color:#b4b4b4">Type here to search</div>
<svg class="a" style="left:364px;top:870px;" width="14" height="20" viewBox="0 0 14 20"><rect x="4" y="1" width="6" height="11" rx="3" fill="none" stroke="#aaa" stroke-width="1.3"/><path d="M1.5 8a5.5 5.5 0 0 0 11 0M7 13.5v4M4 18.5h6" fill="none" stroke="#aaa" stroke-width="1.3"/></svg>
<svg class="a" style="left:404px;top:869px;" width="24" height="22" viewBox="0 0 24 22"><rect x="5.5" y="3.5" width="13" height="15" fill="none" stroke="#fff" stroke-width="1.3"/><path d="M2.5 6v10M21.5 6v10" stroke="#fff" stroke-width="1.2"/></svg>
<svg class="a" style="left:455px;top:868px;" width="24" height="22" viewBox="0 0 24 22"><path d="M1 3h8l2 2h12v15H1z" fill="#f2c94c"/><rect x="1" y="7" width="22" height="13" fill="#ffe08a"/><path d="M8 15h8v5h-2v-3h-4v3H8z" fill="#3aa7e8"/><rect x="6" y="13" width="12" height="3" fill="#3aa7e8"/></svg>
<svg class="a" style="left:504px;top:868px;" width="24" height="24" viewBox="0 0 24 24"><path d="M0 3l14-3v24L0 21z" fill="#1e7145"/><rect x="14" y="3" width="9" height="18" fill="#fff" stroke="#1e7145"/><path d="M14 7h9M14 11h9M14 15h9M18 3v18" stroke="#1e7145"/><path d="M3.5 7l6 10M9.5 7l-6 10" stroke="#fff" stroke-width="2"/></svg>
<svg class="a" style="left:553px;top:868px;" width="24" height="24" viewBox="0 0 24 24"><path d="M0 3l14-3v24L0 21z" fill="#2b579a"/><rect x="14" y="3" width="9" height="18" fill="#fff" stroke="#2b579a"/><path d="M15 7h7M15 10h7M15 13h7M15 16h7" stroke="#2b579a"/><path d="M2 7l2 10 3-7 3 7 2-10" stroke="#fff" stroke-width="1.6" fill="none"/></svg>
<svg class="a" style="left:601px;top:866px;" width="26" height="26" viewBox="0 0 26 26"><defs><radialGradient id="ffg" cx=".5" cy=".45" r=".6"><stop offset="0" stop-color="#5a6ad8"/><stop offset="1" stop-color="#2a2a7a"/></radialGradient><linearGradient id="fft" x1="0" y1="0" x2="0" y2="1"><stop offset="0" stop-color="#ffd330"/><stop offset=".5" stop-color="#ff7a1a"/><stop offset="1" stop-color="#e8340a"/></linearGradient></defs><circle cx="13" cy="14" r="9" fill="url(#ffg)"/><path d="M4 9c-2 4-2 9 1 12.5 3.5 4 10 4.5 14 1.5 4-3 5-8 4-12-1 2-2 3-4 3.5 1-3 0-6-2-8 1 3-1 5-3 5.5-3 .5-5 3-4.5 6-2-1-3-4-2.5-6.5C6 11 5 10 4 9z" fill="url(#fft)"/><path d="M17 2c3 1 6 4 6.5 8.5-1-1.5-2.5-2.5-4-3 .5-2-.5-4-2.5-5.5z" fill="#ffcb2f"/></svg>
<svg class="a" style="left:651px;top:867px;" width="25" height="25" viewBox="0 0 25 25"><circle cx="12.5" cy="12.5" r="11.5" fill="#db4437"/><path d="M12.5 12.5L2.5 18.3A11.5 11.5 0 0 0 16 23.4z" fill="#0f9d58"/><path d="M12.5 12.5L24 12.5A11.5 11.5 0 0 1 16 23.4z" fill="#ffcd40"/><path d="M12.5 7h11A11.5 11.5 0 0 1 24 12.5L16 23.4" fill="#ffcd40"/><circle cx="12.5" cy="12.5" r="5.3" fill="#fff"/><circle cx="12.5" cy="12.5" r="4.2" fill="#4285f4"/></svg>
<svg class="a" style="left:699px;top:868px;" width="24" height="22" viewBox="0 0 24 22"><rect x="1" y="2" width="9" height="9" fill="#eee" stroke="#999"/><rect x="13" y="2" width="9" height="9" fill="#eee" stroke="#999"/><rect x="7" y="12" width="9" height="9" fill="#eee" stroke="#999"/><text x="3" y="9" font-size="7" fill="#c00" font-family="Liberation Sans">u</text><text x="16" y="9" font-size="7" fill="#c00" font-family="Liberation Sans">i</text><text x="9" y="19" font-size="7" fill="#c00" font-family="Liberation Sans">n</text></svg>
<svg class="a" style="left:749px;top:867px;" width="24" height="24" viewBox="0 0 24 24"><circle cx="12" cy="12" r="11" fill="#00aff0"/><circle cx="5" cy="5" r="4.5" fill="#00aff0"/><circle cx="19" cy="19" r="4.5" fill="#00aff0"/><text x="6.5" y="18" font-size="16" font-weight="bold" fill="#fff" font-family="Liberation Sans">S</text></svg>
<svg class="a" style="left:798px;top:867px;" width="24" height="25" viewBox="0 0 24 25"><path d="M0 0h18l6 6v19H0z" fill="#7b2f8c"/><path d="M18 0v6h6" fill="#b56fc7"/><text x="4" y="17" font-size="14" font-weight="bold" font-style="italic" fill="#fff" font-family="Liberation Sans">G</text><text x="5" y="23" font-size="5" fill="#fff" font-family="Liberation Sans">PDF</text></svg>
<div class="a" style="left:834px;top:860px;width:48px;height:40px;background:#3a3a3a"></div>
<svg class="a" style="left:847px;top:868px;" width="23" height="22" viewBox="0 0 23 22"><rect x=".5" y=".5" width="22" height="21" fill="#3d8b40" stroke="#2a6a2d"/><rect x="2.5" y="2.5" width="18" height="17" fill="#1f5f22" stroke="#9bd49e"/><path d="M6 5h11v3h-1.5l-.5-1.5h-6l4 4.5-4 4.5h6l.5-1.5H17v3H6v-1.2l4.5-4.8L6 6.2z" fill="#e8f5e8"/></svg>
<div class="a" style="left:594px;top:898px;width:40px;height:2px;background:#76b9ed"></div>
<div class="a" style="left:643px;top:898px;width:40px;height:2px;background:#76b9ed"></div>
<div class="a" style="left:692px;top:898px;width:40px;height:2px;background:#76b9ed"></div>
<div class="a" style="left:741px;top:898px;width:40px;height:2px;background:#76b9ed"></div>
<div class="a" style="left:789px;top:898px;width:40px;height:2px;background:#76b9ed"></div>
<div class="a" style="left:834px;top:898px;width:48px;height:2px;background:#76b9ed"></div>
<svg class="a" style="left:1196px;top:874px;" width="14" height="9" viewBox="0 0 14 9"><path d="M1 8l6-6 6 6" fill="none" stroke="#fff" stroke-width="1.3"/></svg>
<svg class="a" style="left:1219px;top:873px;" width="16" height="11" viewBox="0 0 16 11"><rect x=".5" y="1.5" width="13" height="8" fill="none" stroke="#fff"/><rect x="2" y="3" width="9" height="5" fill="#fff"/><rect x="14" y="4" width="1.5" height="3" fill="#fff"/></svg>
<svg class="a" style="left:1244px;top:870px;" width="17" height="15" viewBox="0 0 17 15"><path d="M2 13a11 11 0 0 1 11-11M5 13a8 8 0 0 1 8-8M8 13a5 5 0 0 1 5-5" fill="none" stroke="#fff" stroke-width="1.1"/><circle cx="12" cy="13" r="1.5" fill="#fff"/></svg>
<svg class="a" style="left:1266px;top:870px;" width="18" height="16" viewBox="0 0 18 16"><path d="M1 5h3l4-4v14l-4-4H1z" fill="none" stroke="#fff" stroke-width="1.1"/><path d="M11 5a4 4 0 0 1 0 6M13.5 3a7 7 0 0 1 0 10M16 1.5a9 9 0 0 1 0 13" fill="none" stroke="#fff" stroke-width="1.1"/></svg>
<div class="t" style="left:1293px;top:874px;font-size:11.8px;color:#fff">ENG</div>
<div class="t" style="left:1331px;top:866px;font-size:11.8px;color:#fff">11:50 AM</div>
<div class="t" style="left:1330px;top:883px;font-size:11.8px;color:#fff">12/3/2017</div>
<svg class="a" style="left:1396px;top:869px;" width="30" height="30" viewBox="0 0 30 30"><path d="M3 3h16v13H10l-1.5 2-2-2H3z" fill="#fff"/><path d="M6 6.5h10M6 9.5h10M6 12.5h6.5" stroke="#06070b" stroke-width="1"/><circle cx="18.7" cy="18.3" r="8" fill="#262626" stroke="#8a8a8a" stroke-width="1"/><path d="M17 15.5l2.5-2v10" fill="none" stroke="#fff" stroke-width="1.6"/></svg>
<div class="a" style="left:1435px;top:860px;width:1px;height:40px;background:#5a5a5a"></div>
<div class="a" style="left:449px;top:174px;width:541px;height:510px;background:#f0f0f0;border:1px solid #1883d7;box-shadow:0 3px 13px 1px rgba(0,0,0,.3)"></div>
<div class="a" style="left:450px;top:175px;width:539px;height:67px;background:#fff"></div>
<div class="t" style="left:453px;top:179px;font-size:12px">Tải đơn giá</div>
<svg class="a" style="left:971px;top:178px;" width="13" height="13" viewBox="0 0 13 13"><path d="M1 1l11 11M12 1L1 12" stroke="#111" stroke-width="1"/></svg>
<div class="t" style="left:461px;top:207px;font-family:'Liberation Serif',serif;font-size:20.5px;font-weight:bold;color:#6e6e6e">Tải đơn giá từ Internet</div>
<div class="a" style="left:450px;top:241px;width:539px;height:1px;background:#9a9a9a"></div>
<div class="a" style="left:454px;top:242px;width:518px;height:398px;overflow:hidden;background:#fff;border-left:1px solid #c8c8c8">
<div class="a" style="left:0;top:10px;width:519px;height:1px;background:#cfcfcf"></div>
<svg class="a" style="left:9px;top:-10px" width="18" height="18" viewBox="0 0 18 18"><defs><linearGradient id="g0" x1="0" x2="1"><stop offset="0" stop-color="#a9b2ba"/><stop offset=".4" stop-color="#e6ebef"/><stop offset="1" stop-color="#9aa3ab"/></linearGradient></defs><path d="M1 3.5v9.5c0 1.7 3 2.4 6.5 2.4s6.5-.7 6.5-2.4v-9.5" fill="url(#g0)" stroke="#8d969e" stroke-width=".8"/><ellipse cx="7.5" cy="3.5" rx="6.5" ry="2.3" fill="#dfe5ea" stroke="#8d969e" stroke-width=".8"/><path d="M1 8.5c0 1.7 3 2.6 6.5 2.6s6.5-.9 6.5-2.6" fill="none" stroke="#8d969e" stroke-width=".8"/><path d="M11.5 6h5l-2.5 4h2.5l-6 6.5 1.8-4.6H9.5z" fill="#f6d04a" stroke="#d98a1a" stroke-width=".8"/></svg>
<div class="s" style="left:34px;top:-10px;letter-spacing:0">Bến Nam</div>
<div class="s" style="left:174px;top:-10px;color:#007d00;letter-spacing:0">(Đã có)</div>
<div class="a" style="left:452px;top:-12px;width:56px;height:19px;background:#e1e1e1;border:1px solid #adadad"></div>
<div class="t" style="left:480px;top:-7px;font-size:11.5px;transform:translateX(-50%)">Tải về</div>
<div class="a" style="left:0;top:36px;width:519px;height:1px;background:#cfcfcf"></div>
<svg class="a" style="left:9px;top:16px" width="18" height="18" viewBox="0 0 18 18"><defs><linearGradient id="g1" x1="0" x2="1"><stop offset="0" stop-color="#a9b2ba"/><stop offset=".4" stop-color="#e6ebef"/><stop offset="1" stop-color="#9aa3ab"/></linearGradient></defs><path d="M1 3.5v9.5c0 1.7 3 2.4 6.5 2.4s6.5-.7 6.5-2.4v-9.5" fill="url(#g1)" stroke="#8d969e" stroke-width=".8"/><ellipse cx="7.5" cy="3.5" rx="6.5" ry="2.3" fill="#dfe5ea" stroke="#8d969e" stroke-width=".8"/><path d="M1 8.5c0 1.7 3 2.6 6.5 2.6s6.5-.9 6.5-2.6" fill="none" stroke="#8d969e" stroke-width=".8"/><path d="M11.5 6h5l-2.5 4h2.5l-6 6.5 1.8-4.6H9.5z" fill="#f6d04a" stroke="#d98a1a" stroke-width=".8"/></svg>
<div class="s" style="left:34px;top:16px;letter-spacing:0">Bến Tre</div>
<div class="s" style="left:174px;top:16px;color:#007d00;letter-spacing:0">(Đã có)</div>
<div class="a" style="left:452px;top:14px;width:56px;height:19px;background:#e1e1e1;border:1px solid #adadad"></div>
<div class="t" style="left:480px;top:19px;font-size:11.5px;transform:translateX(-50%)">Tải về</div>
<div class="a" style="left:0;top:62px;width:519px;height:1px;background:#cfcfcf"></div>
<svg class="a" style="left:9px;top:42px" width="18" height="18" viewBox="0 0 18 18"><defs><linearGradient id="g2" x1="0" x2="1"><stop offset="0" stop-color="#a9b2ba"/><stop offset=".4" stop-color="#e6ebef"/><stop offset="1" stop-color="#9aa3ab"/></linearGradient></defs><path d="M1 3.5v9.5c0 1.7 3 2.4 6.5 2.4s6.5-.7 6.5-2.4v-9.5" fill="url(#g2)" stroke="#8d969e" stroke-width=".8"/><ellipse cx="7.5" cy="3.5" rx="6.5" ry="2.3" fill="#dfe5ea" stroke="#8d969e" stroke-width=".8"/><path d="M1 8.5c0 1.7 3 2.6 6.5 2.6s6.5-.9 6.5-2.6" fill="none" stroke="#8d969e" stroke-width=".8"/><path d="M11.5 6h5l-2.5 4h2.5l-6 6.5 1.8-4.6H9.5z" fill="#f6d04a" stroke="#d98a1a" stroke-width=".8"/></svg>
<div class="s" style="left:34px;top:42px;letter-spacing:0">Bình Định</div>
<div class="s" style="left:174px;top:42px;color:#007d00;letter-spacing:0">(Đã có)</div>
<div class="a" style="left:452px;top:40px;width:56px;height:19px;background:#e1e1e1;border:1px solid #adadad"></div>
<div class="t" style="left:480px;top:45px;font-size:11.5px;transform:translateX(-50%)">Tải về</div>
<div class="a" style="left:0;top:88px;width:519px;height:1px;background:#cfcfcf"></div>
<svg class="a" style="left:9px;top:68px" width="18" height="18" viewBox="0 0 18 18"><defs><linearGradient id="g3" x1="0" x2="1"><stop offset="0" stop-color="#a9b2ba"/><stop offset=".4" stop-color="#e6ebef"/><stop offset="1" stop-color="#9aa3ab"/></linearGradient></defs><path d="M1 3.5v9.5c0 1.7 3 2.4 6.5 2.4s6.5-.7 6.5-2.4v-9.5" fill="url(#g3)" stroke="#8d969e" stroke-width=".8"/><ellipse cx="7.5" cy="3.5" rx="6.5" ry="2.3" fill="#dfe5ea" stroke="#8d969e" stroke-width=".8"/><path d="M1 8.5c0 1.7 3 2.6 6.5 2.6s6.5-.9 6.5-2.6" fill="none" stroke="#8d969e" stroke-width=".8"/><path d="M11.5 6h5l-2.5 4h2.5l-6 6.5 1.8-4.6H9.5z" fill="#f6d04a" stroke="#d98a1a" stroke-width=".8"/></svg>
<div class="s" style="left:34px;top:68px;letter-spacing:0">Bình Dương</div>
<div class="s" style="left:174px;top:68px;color:#007d00;letter-spacing:0">(Đã có)</div>
<div class="a" style="left:452px;top:66px;width:56px;height:19px;background:#e1e1e1;border:1px solid #adadad"></div>
<div class="t" style="left:480px;top:71px;font-size:11.5px;transform:translateX(-50%)">Tải về</div>
<div class="a" style="left:0;top:114px;width:519px;height:1px;background:#cfcfcf"></div>
<svg class="a" style="left:9px;top:94px" width="18" height="18" viewBox="0 0 18 18"><defs><linearGradient id="g4" x1="0" x2="1"><stop offset="0" stop-color="#a9b2ba"/><stop offset=".4" stop-color="#e6ebef"/><stop offset="1" stop-color="#9aa3ab"/></linearGradient></defs><path d="M1 3.5v9.5c0 1.7 3 2.4 6.5 2.4s6.5-.7 6.5-2.4v-9.5" fill="url(#g4)" stroke="#8d969e" stroke-width=".8"/><ellipse cx="7.5" cy="3.5" rx="6.5" ry="2.3" fill="#dfe5ea" stroke="#8d969e" stroke-width=".8"/><path d="M1 8.5c0 1.7 3 2.6 6.5 2.6s6.5-.9 6.5-2.6" fill="none" stroke="#8d969e" stroke-width=".8"/><path d="M11.5 6h5l-2.5 4h2.5l-6 6.5 1.8-4.6H9.5z" fill="#f6d04a" stroke="#d98a1a" stroke-width=".8"/></svg>
<div class="s" style="left:34px;top:94px;letter-spacing:0">Bình Phước</div>
<div class="a" style="left:452px;top:92px;width:56px;height:19px;background:#e1e1e1;border:1px solid #adadad"></div>
<div class="t" style="left:480px;top:97px;font-size:11.5px;transform:translateX(-50%)">Tải về</div>
<div class="a" style="left:0;top:140px;width:519px;height:1px;background:#cfcfcf"></div>
<svg class="a" style="left:9px;top:120px" width="18" height="18" viewBox="0 0 18 18"><defs><linearGradient id="g5" x1="0" x2="1"><stop offset="0" stop-color="#a9b2ba"/><stop offset=".4" stop-color="#e6ebef"/><stop offset="1" stop-color="#9aa3ab"/></linearGradient></defs><path d="M1 3.5v9.5c0 1.7 3 2.4 6.5 2.4s6.5-.7 6.5-2.4v-9.5" fill="url(#g5)" stroke="#8d969e" stroke-width=".8"/><ellipse cx="7.5" cy="3.5" rx="6.5" ry="2.3" fill="#dfe5ea" stroke="#8d969e" stroke-width=".8"/><path d="M1 8.5c0 1.7 3 2.6 6.5 2.6s6.5-.9 6.5-2.6" fill="none" stroke="#8d969e" stroke-width=".8"/><path d="M11.5 6h5l-2.5 4h2.5l-6 6.5 1.8-4.6H9.5z" fill="#f6d04a" stroke="#d98a1a" stroke-width=".8"/></svg>
<div class="s" style="left:34px;top:120px;letter-spacing:0">Bình Thuận</div>
<div class="a" style="left:452px;top:118px;width:56px;height:19px;background:#e1e1e1;border:1px solid #adadad"></div>
<div class="t" style="left:480px;top:123px;font-size:11.5px;transform:translateX(-50%)">Tải về</div>
<div class="a" style="left:0;top:166px;width:519px;height:1px;background:#cfcfcf"></div>
<svg class="a" style="left:9px;top:146px" width="18" height="18" viewBox="0 0 18 18"><defs><linearGradient id="g6" x1="0" x2="1"><stop offset="0" stop-color="#a9b2ba"/><stop offset=".4" stop-color="#e6ebef"/><stop offset="1" stop-color="#9aa3ab"/></linearGradient></defs><path d="M1 3.5v9.5c0 1.7 3 2.4 6.5 2.4s6.5-.7 6.5-2.4v-9.5" fill="url(#g6)" stroke="#8d969e" stroke-width=".8"/><ellipse cx="7.5" cy="3.5" rx="6.5" ry="2.3" fill="#dfe5ea" stroke="#8d969e" stroke-width=".8"/><path d="M1 8.5c0 1.7 3 2.6 6.5 2.6s6.5-.9 6.5-2.6" fill="none" stroke="#8d969e" stroke-width=".8"/><path d="M11.5 6h5l-2.5 4h2.5l-6 6.5 1.8-4.6H9.5z" fill="#f6d04a" stroke="#d98a1a" stroke-width=".8"/></svg>
<div class="s" style="left:34px;top:146px;letter-spacing:0">Cà Mau</div>
<div class="a" style="left:452px;top:144px;width:56px;height:19px;background:#e1e1e1;border:1px solid #adadad"></div>
<div class="t" style="left:480px;top:149px;font-size:11.5px;transform:translateX(-50%)">Tải về</div>
<div class="a" style="left:0;top:166px;width:519px;height:26px;background:#f2f2f2"></div>
<div class="a" style="left:0;top:192px;width:519px;height:1px;background:#cfcfcf"></div>
<svg class="a" style="left:9px;top:172px" width="18" height="18" viewBox="0 0 18 18"><defs><linearGradient id="g7" x1="0" x2="1"><stop offset="0" stop-color="#a9b2ba"/><stop offset=".4" stop-color="#e6ebef"/><stop offset="1" stop-color="#9aa3ab"/></linearGradient></defs><path d="M1 3.5v9.5c0 1.7 3 2.4 6.5 2.4s6.5-.7 6.5-2.4v-9.5" fill="url(#g7)" stroke="#8d969e" stroke-width=".8"/><ellipse cx="7.5" cy="3.5" rx="6.5" ry="2.3" fill="#dfe5ea" stroke="#8d969e" stroke-width=".8"/><path d="M1 8.5c0 1.7 3 2.6 6.5 2.6s6.5-.9 6.5-2.6" fill="none" stroke="#8d969e" stroke-width=".8"/><path d="M11.5 6h5l-2.5 4h2.5l-6 6.5 1.8-4.6H9.5z" fill="#f6d04a" stroke="#d98a1a" stroke-width=".8"/></svg>
<div class="s" style="left:34px;top:172px;letter-spacing:0">Cần Thơ</div>
<div class="a" style="left:452px;top:170px;width:56px;height:19px;background:#e1e1e1;border:1px solid #adadad"></div>
<div class="t" style="left:480px;top:175px;font-size:11.5px;transform:translateX(-50%)">Tải về</div>
<div class="a" style="left:0;top:218px;width:519px;height:1px;background:#cfcfcf"></div>
<svg class="a" style="left:9px;top:198px" width="18" height="18" viewBox="0 0 18 18"><defs><linearGradient id="g8" x1="0" x2="1"><stop offset="0" stop-color="#a9b2ba"/><stop offset=".4" stop-color="#e6ebef"/><stop offset="1" stop-color="#9aa3ab"/></linearGradient></defs><path d="M1 3.5v9.5c0 1.7 3 2.4 6.5 2.4s6.5-.7 6.5-2.4v-9.5" fill="url(#g8)" stroke="#8d969e" stroke-width=".8"/><ellipse cx="7.5" cy="3.5" rx="6.5" ry="2.3" fill="#dfe5ea" stroke="#8d969e" stroke-width=".8"/><path d="M1 8.5c0 1.7 3 2.6 6.5 2.6s6.5-.9 6.5-2.6" fill="none" stroke="#8d969e" stroke-width=".8"/><path d="M11.5 6h5l-2.5 4h2.5l-6 6.5 1.8-4.6H9.5z" fill="#f6d04a" stroke="#d98a1a" stroke-width=".8"/></svg>
<div class="s" style="left:34px;top:198px;letter-spacing:0">Cao Bằng</div>
<div class="s" style="left:174px;top:198px;color:#007d00;letter-spacing:0">(Đã có)</div>
<div class="t" style="left:407px;top:200px;font-size:12px;font-weight:bold;color:#108a10">Đã tải về máy.</div>
<div class="a" style="left:0;top:244px;width:519px;height:1px;background:#cfcfcf"></div>
<svg class="a" style="left:9px;top:224px" width="18" height="18" viewBox="0 0 18 18"><defs><linearGradient id="g9" x1="0" x2="1"><stop offset="0" stop-color="#a9b2ba"/><stop offset=".4" stop-color="#e6ebef"/><stop offset="1" stop-color="#9aa3ab"/></linearGradient></defs><path d="M1 3.5v9.5c0 1.7 3 2.4 6.5 2.4s6.5-.7 6.5-2.4v-9.5" fill="url(#g9)" stroke="#8d969e" stroke-width=".8"/><ellipse cx="7.5" cy="3.5" rx="6.5" ry="2.3" fill="#dfe5ea" stroke="#8d969e" stroke-width=".8"/><path d="M1 8.5c0 1.7 3 2.6 6.5 2.6s6.5-.9 6.5-2.6" fill="none" stroke="#8d969e" stroke-width=".8"/><path d="M11.5 6h5l-2.5 4h2.5l-6 6.5 1.8-4.6H9.5z" fill="#f6d04a" stroke="#d98a1a" stroke-width=".8"/></svg>
<div class="s" style="left:34px;top:224px;letter-spacing:0">Chuyên ngành</div>
<div class="a" style="left:452px;top:222px;width:56px;height:19px;background:#e1e1e1;border:1px solid #adadad"></div>
<div class="t" style="left:480px;top:227px;font-size:11.5px;transform:translateX(-50%)">Tải về</div>
<div class="a" style="left:0;top:270px;width:519px;height:1px;background:#cfcfcf"></div>
<svg class="a" style="left:9px;top:250px" width="18" height="18" viewBox="0 0 18 18"><defs><linearGradient id="g10" x1="0" x2="1"><stop offset="0" stop-color="#a9b2ba"/><stop offset=".4" stop-color="#e6ebef"/><stop offset="1" stop-color="#9aa3ab"/></linearGradient></defs><path d="M1 3.5v9.5c0 1.7 3 2.4 6.5 2.4s6.5-.7 6.5-2.4v-9.5" fill="url(#g10)" stroke="#8d969e" stroke-width=".8"/><ellipse cx="7.5" cy="3.5" rx="6.5" ry="2.3" fill="#dfe5ea" stroke="#8d969e" stroke-width=".8"/><path d="M1 8.5c0 1.7 3 2.6 6.5 2.6s6.5-.9 6.5-2.6" fill="none" stroke="#8d969e" stroke-width=".8"/><path d="M11.5 6h5l-2.5 4h2.5l-6 6.5 1.8-4.6H9.5z" fill="#f6d04a" stroke="#d98a1a" stroke-width=".8"/></svg>
<div class="s" style="left:34px;top:250px;letter-spacing:0">Công ich</div>
<div class="s" style="left:174px;top:250px;color:#007d00;letter-spacing:0">(Đã có)</div>
<div class="a" style="left:452px;top:248px;width:56px;height:19px;background:#e1e1e1;border:1px solid #adadad"></div>
<div class="t" style="left:480px;top:253px;font-size:11.5px;transform:translateX(-50%)">Tải về</div>
<div class="a" style="left:0;top:296px;width:519px;height:1px;background:#cfcfcf"></div>
<svg class="a" style="left:9px;top:276px" width="18" height="18" viewBox="0 0 18 18"><defs><linearGradient id="g11" x1="0" x2="1"><stop offset="0" stop-color="#a9b2ba"/><stop offset=".4" stop-color="#e6ebef"/><stop offset="1" stop-color="#9aa3ab"/></linearGradient></defs><path d="M1 3.5v9.5c0 1.7 3 2.4 6.5 2.4s6.5-.7 6.5-2.4v-9.5" fill="url(#g11)" stroke="#8d969e" stroke-width=".8"/><ellipse cx="7.5" cy="3.5" rx="6.5" ry="2.3" fill="#dfe5ea" stroke="#8d969e" stroke-width=".8"/><path d="M1 8.5c0 1.7 3 2.6 6.5 2.6s6.5-.9 6.5-2.6" fill="none" stroke="#8d969e" stroke-width=".8"/><path d="M11.5 6h5l-2.5 4h2.5l-6 6.5 1.8-4.6H9.5z" fill="#f6d04a" stroke="#d98a1a" stroke-width=".8"/></svg>
<div class="s" style="left:34px;top:276px;letter-spacing:0">Đắc Lắk</div>
<div class="a" style="left:452px;top:274px;width:56px;height:19px;background:#e1e1e1;border:1px solid #adadad"></div>
<div class="t" style="left:480px;top:279px;font-size:11.5px;transform:translateX(-50%)">Tải về</div>
<div class="a" style="left:0;top:322px;width:519px;height:1px;background:#cfcfcf"></div>
<svg class="a" style="left:9px;top:302px" width="18" height="18" viewBox="0 0 18 18"><defs><linearGradient id="g12" x1="0" x2="1"><stop offset="0" stop-color="#a9b2ba"/><stop offset=".4" stop-color="#e6ebef"/><stop offset="1" stop-color="#9aa3ab"/></linearGradient></defs><path d="M1 3.5v9.5c0 1.7 3 2.4 6.5 2.4s6.5-.7 6.5-2.4v-9.5" fill="url(#g12)" stroke="#8d969e" stroke-width=".8"/><ellipse cx="7.5" cy="3.5" rx="6.5" ry="2.3" fill="#dfe5ea" stroke="#8d969e" stroke-width=".8"/><path d="M1 8.5c0 1.7 3 2.6 6.5 2.6s6.5-.9 6.5-2.6" fill="none" stroke="#8d969e" stroke-width=".8"/><path d="M11.5 6h5l-2.5 4h2.5l-6 6.5 1.8-4.6H9.5z" fill="#f6d04a" stroke="#d98a1a" stroke-width=".8"/></svg>
<div class="s" style="left:34px;top:302px;letter-spacing:0">Đăknông</div>
<div class="a" style="left:452px;top:300px;width:56px;height:19px;background:#e1e1e1;border:1px solid #adadad"></div>
<div class="t" style="left:480px;top:305px;font-size:11.5px;transform:translateX(-50%)">Tải về</div>
<div class="a" style="left:0;top:348px;width:519px;height:1px;background:#cfcfcf"></div>
<svg class="a" style="left:9px;top:328px" width="18" height="18" viewBox="0 0 18 18"><defs><linearGradient id="g13" x1="0" x2="1"><stop offset="0" stop-color="#a9b2ba"/><stop offset=".4" stop-color="#e6ebef"/><stop offset="1" stop-color="#9aa3ab"/></linearGradient></defs><path d="M1 3.5v9.5c0 1.7 3 2.4 6.5 2.4s6.5-.7 6.5-2.4v-9.5" fill="url(#g13)" stroke="#8d969e" stroke-width=".8"/><ellipse cx="7.5" cy="3.5" rx="6.5" ry="2.3" fill="#dfe5ea" stroke="#8d969e" stroke-width=".8"/><path d="M1 8.5c0 1.7 3 2.6 6.5 2.6s6.5-.9 6.5-2.6" fill="none" stroke="#8d969e" stroke-width=".8"/><path d="M11.5 6h5l-2.5 4h2.5l-6 6.5 1.8-4.6H9.5z" fill="#f6d04a" stroke="#d98a1a" stroke-width=".8"/></svg>
<div class="s" style="left:34px;top:328px;letter-spacing:0">Đà Nẵng</div>
<div class="s" style="left:174px;top:328px;color:#007d00;letter-spacing:0">(Đã có)</div>
<div class="a" style="left:452px;top:326px;width:56px;height:19px;background:#e1e1e1;border:1px solid #adadad"></div>
<div class="t" style="left:480px;top:331px;font-size:11.5px;transform:translateX(-50%)">Tải về</div>
<div class="a" style="left:0;top:374px;width:519px;height:1px;background:#cfcfcf"></div>
<svg class="a" style="left:9px;top:354px" width="18" height="18" viewBox="0 0 18 18"><defs><linearGradient id="g14" x1="0" x2="1"><stop offset="0" stop-color="#a9b2ba"/><stop offset=".4" stop-color="#e6ebef"/><stop offset="1" stop-color="#9aa3ab"/></linearGradient></defs><path d="M1 3.5v9.5c0 1.7 3 2.4 6.5 2.4s6.5-.7 6.5-2.4v-9.5" fill="url(#g14)" stroke="#8d969e" stroke-width=".8"/><ellipse cx="7.5" cy="3.5" rx="6.5" ry="2.3" fill="#dfe5ea" stroke="#8d969e" stroke-width=".8"/><path d="M1 8.5c0 1.7 3 2.6 6.5 2.6s6.5-.9 6.5-2.6" fill="none" stroke="#8d969e" stroke-width=".8"/><path d="M11.5 6h5l-2.5 4h2.5l-6 6.5 1.8-4.6H9.5z" fill="#f6d04a" stroke="#d98a1a" stroke-width=".8"/></svg>
<div class="s" style="left:34px;top:354px;letter-spacing:0">Điện</div>
<div class="s" style="left:174px;top:354px;color:#007d00;letter-spacing:0">(Đã có)</div>
<div class="a" style="left:452px;top:352px;width:56px;height:19px;background:#e1e1e1;border:1px solid #adadad"></div>
<div class="t" style="left:480px;top:357px;font-size:11.5px;transform:translateX(-50%)">Tải về</div>
<div class="a" style="left:0;top:400px;width:519px;height:1px;background:#cfcfcf"></div>
<svg class="a" style="left:9px;top:380px" width="18" height="18" viewBox="0 0 18 18"><defs><linearGradient id="g15" x1="0" x2="1"><stop offset="0" stop-color="#a9b2ba"/><stop offset=".4" stop-color="#e6ebef"/><stop offset="1" stop-color="#9aa3ab"/></linearGradient></defs><path d="M1 3.5v9.5c0 1.7 3 2.4 6.5 2.4s6.5-.7 6.5-2.4v-9.5" fill="url(#g15)" stroke="#8d969e" stroke-width=".8"/><ellipse cx="7.5" cy="3.5" rx="6.5" ry="2.3" fill="#dfe5ea" stroke="#8d969e" stroke-width=".8"/><path d="M1 8.5c0 1.7 3 2.6 6.5 2.6s6.5-.9 6.5-2.6" fill="none" stroke="#8d969e" stroke-width=".8"/><path d="M11.5 6h5l-2.5 4h2.5l-6 6.5 1.8-4.6H9.5z" fill="#f6d04a" stroke="#d98a1a" stroke-width=".8"/></svg>
<div class="s" style="left:34px;top:380px;letter-spacing:0">Điện Biên</div>
<div class="s" style="left:174px;top:380px;color:#007d00;letter-spacing:0">(Đã có)</div>
<div class="a" style="left:452px;top:378px;width:56px;height:19px;background:#e1e1e1;border:1px solid #adadad"></div>
<div class="t" style="left:480px;top:383px;font-size:11.5px;transform:translateX(-50%)">Tải về</div>
</div>
<div class="a" style="left:973px;top:242px;width:16px;height:398px;background:#f0f0f0"></div>
<svg class="a" style="left:976px;top:247px;" width="10" height="7" viewBox="0 0 10 7"><path d="M1 5.5l4-4 4 4" fill="none" stroke="#606060" stroke-width="1.3"/></svg>
<div class="a" style="left:974px;top:281px;width:14px;height:68px;background:#cdcdcd"></div>
<svg class="a" style="left:976px;top:627px;" width="10" height="7" viewBox="0 0 10 7"><path d="M1 1.5l4 4 4-4" fill="none" stroke="#606060" stroke-width="1.3"/></svg>
<div class="a" style="left:450px;top:640px;width:539px;height:1px;background:#e3e3e3"></div>
<div class="a" style="left:900px;top:651px;width:81px;height:22px;background:#e1e1e1;border:1px solid #adadad"></div>
<div class="t" style="left:940.5px;top:656px;font-size:12px;transform:translateX(-50%)">Đóng</div>
<svg class="a" style="left:0;top:0" width="1440" height="900" viewBox="0 0 1440 900"><ellipse cx="614" cy="60" rx="58.5" ry="44" fill="none" stroke="#ed1c24" stroke-width="5"/><ellipse cx="692.5" cy="441" rx="330" ry="40" fill="none" stroke="#ed1c24" stroke-width="5"/><path d="M1022 441L1046 529" stroke="#ed1c24" stroke-width="5" fill="none"/></svg>
<div class="t" style="left:1137.5px;top:526px;font-family:'Liberation Serif',serif;font-size:27px;font-weight:bold;color:#ed1c24;transform:translateX(-50%)">Tải đơn giá tỉnh</div>
<div class="t" style="left:1142px;top:557px;font-family:'Liberation Serif',serif;font-size:27px;font-weight:bold;color:#ed1c24;transform:translateX(-50%)">Cao Bằng</div>
</body></html>
